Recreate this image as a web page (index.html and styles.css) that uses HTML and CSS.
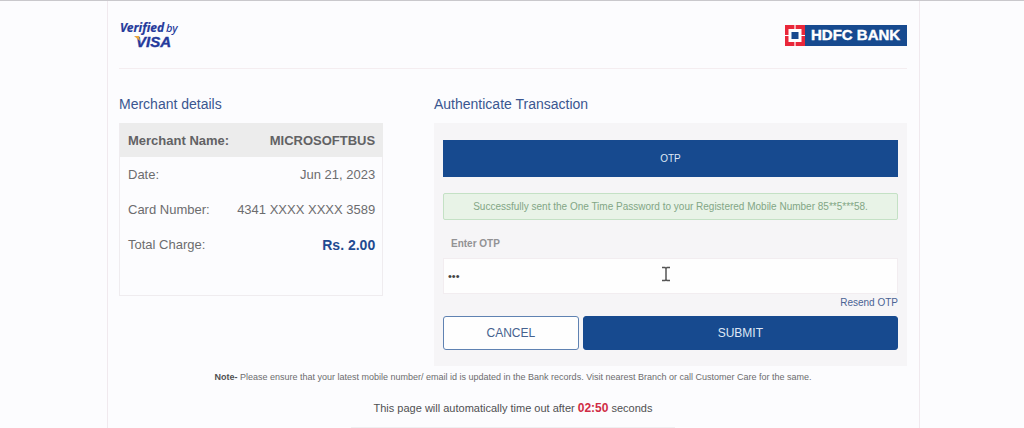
FILE: index.html
```html
<!DOCTYPE html>
<html lang="en">
<head>
<meta charset="utf-8">
<title>Authenticate Transaction</title>
<link rel="stylesheet" href="styles.css">
</head>
<body>
<div class="page">
  <header class="header">
    <svg class="visa" width="62" height="36" viewBox="0 -4 62 36" role="img" aria-label="Verified by VISA">
      <text class="visa-top" x="1" y="11">Verified</text>
      <text class="visa-by" x="47" y="11">by</text>
      <text class="visa-name" x="17" y="26">VISA</text>
      <path d="M15 15h5l1 5z" fill="#e9a53c"/>
    </svg>
    <svg class="hdfc" width="122" height="21" viewBox="0 0 122 21" role="img" aria-label="HDFC BANK">
      <rect width="122" height="21" fill="#174a8f"/>
      <rect width="20" height="21" fill="#e9273a"/>
      <path d="M10 0v21M0 10.5h20" stroke="#fff" stroke-width="1.2"/>
      <rect x="3.5" y="4" width="13" height="13" fill="#fff"/>
      <rect x="6.5" y="7" width="7" height="7" fill="#174a8f"/>
      <text class="hdfc-name" x="26" y="15">HDFC BANK</text>
    </svg>
  </header>
  <main class="columns">
    <section>
      <h2 class="title">Merchant details</h2>
      <div class="box">
        <table class="merchant">
          <tr class="merchant-head"><th scope="row">Merchant Name:</th><td>MICROSOFTBUS</td></tr>
          <tr><th scope="row">Date:</th><td>Jun 21, 2023</td></tr>
          <tr><th scope="row">Card Number:</th><td>4341 XXXX XXXX 3589</td></tr>
          <tr><th scope="row">Total Charge:</th><td class="total">Rs. 2.00</td></tr>
        </table>
      </div>
    </section>
    <section>
      <h2 class="title">Authenticate Transaction</h2>
      <form class="panel">
        <button class="tab" type="button">OTP</button>
        <p class="alert">Successfully sent the One Time Password to your Registered Mobile Number 85**5***58.</p>
        <label class="label" for="otp">Enter OTP</label>
        <div class="field">
          <input class="input" id="otp" type="password" value="123">
          <svg class="cursor" width="10" height="16" viewBox="0 0 10 16" aria-hidden="true">
            <path d="M1 1.5h3l1 1 1-1h3M5 2v12M1 14.5h3l1-1 1 1h3" fill="none" stroke="#555" stroke-width="1.5"/>
          </svg>
        </div>
        <a class="resend" href="#">Resend OTP</a>
        <div class="actions">
          <button class="button cancel" type="button">CANCEL</button>
          <button class="button submit" type="submit">SUBMIT</button>
        </div>
      </form>
    </section>
  </main>
  <footer class="footer">
    <p class="note"><strong>Note-</strong> Please ensure that your latest mobile number/ email id is updated in the Bank records. Visit nearest Branch or call Customer Care for the same.</p>
    <p class="timeout">This page will automatically time out after <strong class="time">02:50</strong> seconds</p>
    <hr class="rule">
  </footer>
</div>
</body>
</html>
```
FILE: styles.css
```css
* { box-sizing: border-box; }
body {
  margin: 0;
  border-top: 1px solid #c9c8cc;
  background: #fcfcfe;
  color: #6c6c6e;
  font-family: "Liberation Sans", Arial, sans-serif;
  font-size: 13px;
}
p, h2 { margin: 0; }
.page {
  margin: 0 104px 0 107px;
  padding: 0 12px 0 11px;
  border: 1px solid #f0e9ee;
  border-width: 0 1px;
}
.header {
  display: flex;
  justify-content: space-between;
  align-items: flex-start;
  height: 68px;
  padding-top: 16px;
  border-bottom: 1px solid #f4edf0;
}
.visa text { fill: #24399b; }
.visa-top {
  font: italic 700 12px "Noto Sans", sans-serif;
  stroke: #24399b;
  stroke-width: 0.2;
}
.visa-by { font: italic 500 11px "Noto Sans", sans-serif; }
.visa-name {
  font: italic 700 15px "Liberation Sans", Arial, sans-serif;
  stroke: #24399b;
  stroke-width: 0.4;
}
.hdfc { margin-top: 8px; }
.hdfc-name {
  fill: #fff;
  stroke: #fff;
  stroke-width: 0.4;
  font: 700 15px "Liberation Sans", Arial, sans-serif;
}
.columns {
  display: grid;
  grid-template-columns: minmax(0, 264fr) minmax(0, 473fr);
  gap: 51px;
  padding-top: 26px;
}
.title {
  height: 28px;
  color: #3a5690;
  font-size: 14px;
  font-weight: 400;
  line-height: 19px;
}
.box {
  padding-bottom: 33px;
  border: 1px solid #efecef;
  border-top: 0;
}
.merchant { width: 100%; border-spacing: 0; white-space: nowrap; }
.merchant tr { height: 34px; }
.merchant tr + tr { height: 35px; }
.merchant th, .merchant td { padding: 0 8px; font-weight: 400; }
.merchant th { padding-right: 0; text-align: left; }
.merchant td { text-align: right; }
.merchant .merchant-head th, .merchant .merchant-head td {
  background: #ececec;
  color: #626264;
  font-weight: 700;
}
.merchant .total { color: #1f4a91; font-size: 14px; font-weight: 700; }
.panel {
  display: flex;
  flex-direction: column;
  padding: 17px 9px 16px;
  background: #f6f5f7;
}
.tab {
  height: 37px;
  border: 0;
  background: #174a8f;
  color: #dfe8f5;
  font: 10px "Liberation Sans", Arial, sans-serif;
}
.alert {
  margin-top: 16px;
  border: 1px solid #c4e1c5;
  border-radius: 2px;
  background: #e8f3e7;
  color: #82a685;
  font-size: 10px;
  line-height: 25px;
  text-align: center;
}
.label {
  padding: 17px 8px 7px;
  color: #929294;
  font-size: 10px;
  font-weight: 700;
  line-height: 14px;
}
.field { position: relative; display: flex; }
.input {
  width: 100%;
  height: 36px;
  padding: 0 4px;
  border: 1px solid #f2edf0;
  background: #fefefe;
  color: #444;
  font: 11px "Liberation Sans", Arial, sans-serif;
}
.cursor { position: absolute; top: 8px; left: 48%; }
.resend {
  align-self: flex-end;
  padding: 2px 0 6px;
  color: #4a6394;
  font-size: 10px;
  line-height: 14px;
  text-decoration: none;
}
.actions { display: grid; grid-template-columns: 136fr 316fr; gap: 4px; }
.button {
  height: 34px;
  border: 1px solid #174a8f;
  border-radius: 3px;
  font: 12px "Liberation Sans", Arial, sans-serif;
}
.cancel { border-color: #5f82b2; background: #fefefe; color: #46628f; }
.submit { background: #174a8f; color: #dfe8f5; }
.footer { text-align: center; }
.note { padding-top: 4px; font-size: 9px; line-height: 14px; }
.note strong { color: #505052; }
.timeout { padding-top: 17px; color: #505052; font-size: 11px; line-height: 14px; }
.time { color: #d02c45; font-size: 12px; }
.rule {
  width: 41%;
  margin: 12px auto 0;
  border: 0;
  border-top: 1px solid #efeff1;
}
```
